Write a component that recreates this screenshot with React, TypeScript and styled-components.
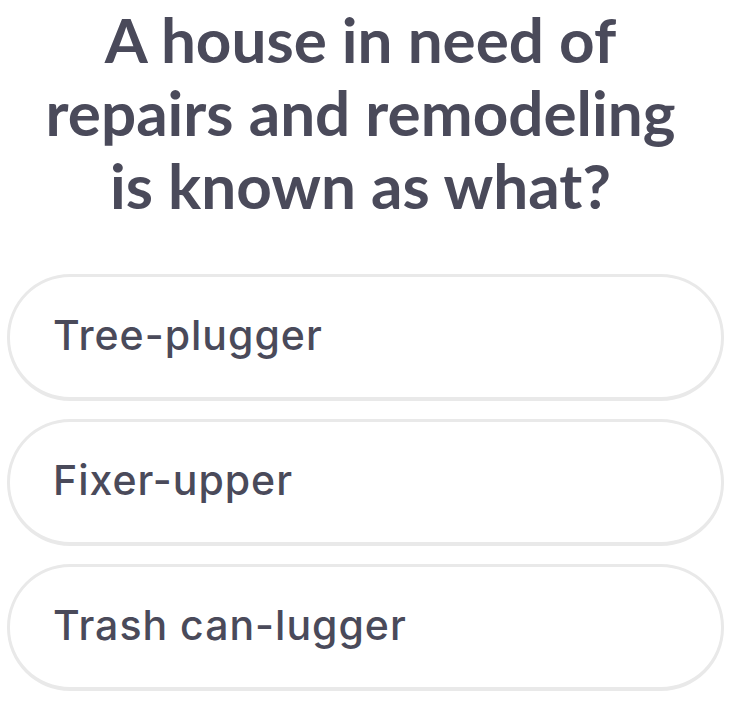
import React from "react";
import styled, { createGlobalStyle } from "styled-components";

const Global = createGlobalStyle`
  html, body { margin: 0; padding: 0; background: #ffffff; }
  body { font-family: "Lato", "Open Sans", sans-serif; }
`;

const Page = styled.div`
  width: 739px;
  height: 723px;
  box-sizing: border-box;
  padding: 0 15px 0 7px;
  display: flex;
  flex-direction: column;
  overflow: hidden;
`;

const Question = styled.h1`
  margin: 3px 0 0 0;
  padding: 0 10px 0 0;
  text-align: center;
  font-family: "Lato", sans-serif;
  font-weight: 700;
  font-size: 62px;
  line-height: 73px;
  color: #4a4a5a;
`;

const Options = styled.div`
  margin-top: 52px;
  display: flex;
  flex-direction: column;
  gap: 18px;
`;

const Option = styled.button`
  height: 127px;
  box-sizing: border-box;
  border: 3px solid #e9e9e9;
  border-bottom-width: 4px;
  border-radius: 63px;
  background: #ffffff;
  display: flex;
  align-items: center;
  padding: 0 0 4px 43px;
  font-family: "Inter", sans-serif;
  font-weight: 500;
  font-size: 41px;
  letter-spacing: 1px;
  color: #4a4a5a;
  text-align: left;
  cursor: pointer;
`;

const answers = ["Tree-plugger", "Fixer-upper", "Trash can-lugger"];

export default function App() {
  return (
    <>
      <Global />
      <Page>
        <Question>
          A house in need of
          <br />
          repairs and remodeling
          <br />
          is known as what?
        </Question>
        <Options>
          {answers.map((a) => (
            <Option key={a}>{a}</Option>
          ))}
        </Options>
      </Page>
    </>
  );
}
